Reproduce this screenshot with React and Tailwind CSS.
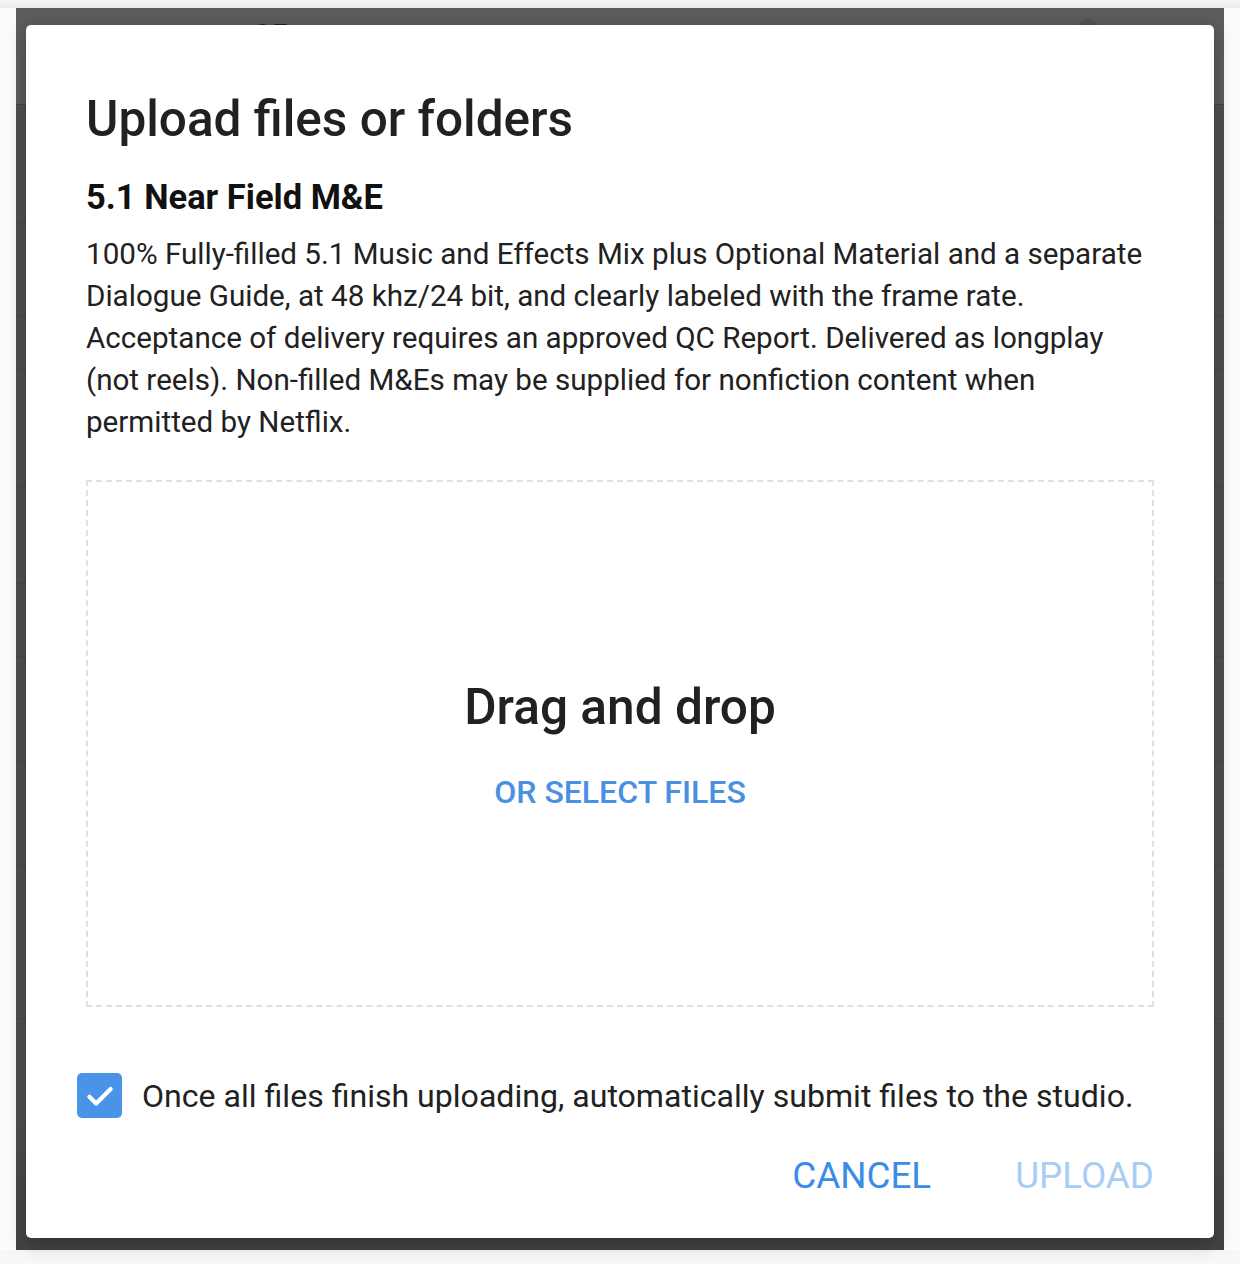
export default function App() {
  return (
    <div className="w-[1240px] h-[1264px] bg-[#fcfcfc] relative overflow-hidden" style={{ fontFamily: 'Roboto, "Noto Sans", sans-serif' }}>
      {/* top light strip */}
      <div className="h-[8px] bg-gradient-to-b from-[#f7f7f7] to-[#ececec]" />
      <div className="flex">
        <div className="w-[16px]" />
        {/* backdrop */}
        <div className="w-[1208px] h-[1242px] relative bg-[#505050]">
          <div className="flex flex-col h-full">
            <div className="h-[97px] bg-[#5d5d5d] border-b border-[#464646]" />
            <div className="h-[118px] border-b border-[#4a4a4a]" />
            <div className="h-[94px] border-b border-[#4a4a4a]" />
            <div className="h-[53px] border-b border-[#4a4a4a]" />
            <div className="h-[117px] border-b border-[#4a4a4a]" />
            <div className="h-[97px] border-b border-[#4a4a4a]" />
            <div className="h-[73px] border-b border-[#4a4a4a]" />
            <div className="h-[105px] border-b border-[#4a4a4a]" />
            <div className="h-[104px] border-b border-[#4a4a4a]" />
            <div className="h-[153px] border-b border-[#4a4a4a]" />
            <div className="h-[105px] border-b border-[#4a4a4a]" />
            <div className="flex-1 bg-gradient-to-b from-[#4f4f4f] to-[#434343]" />
          </div>
          <span className="absolute left-[238px] top-[12px] text-[30px] leading-[30px] font-bold text-[#1e1e1e]">95</span>
          <span className="absolute left-[1060px] top-[11px] w-[24px] h-[24px] rounded-full bg-[#565656]" />
          {/* dialog */}
          <div className="absolute left-[10px] top-[17px] w-[1188px] h-[1213px] bg-white rounded-[5px] shadow-[0_4px_20px_rgba(0,0,0,0.3)] flex flex-col px-[60px]">
            <h1 className="mt-[66px] text-[49.5px] leading-[56px] font-medium text-[#212121]">Upload files or folders</h1>
            <h2 className="mt-[30px] text-[34.5px] leading-[40px] font-bold text-[#111]">5.1 Near Field M&amp;E</h2>
            <p className="mt-[16px] text-[29.6px] leading-[42px] text-[#212121] whitespace-nowrap">
              100% Fully-filled 5.1 Music and Effects Mix plus Optional Material and a separate<br />
              Dialogue Guide, at 48 khz/24 bit, and clearly labeled with the frame rate.<br />
              Acceptance of delivery requires an approved QC Report. Delivered as longplay<br />
              (not reels). Non-filled M&amp;Es may be supplied for nonfiction content when<br />
              permitted by Netflix.
            </p>
            <div className="mt-[37px] h-[527px] border-2 border-dashed border-[#e0e0e0] flex flex-col items-center justify-center">
              <div className="text-[49.6px] leading-[56px] font-medium text-[#212121] mt-[3px]">Drag and drop</div>
              <button className="mt-[37px] text-[32px] leading-[40px] font-medium text-[#4a90e2]">OR SELECT FILES</button>
            </div>
            <label className="mt-[66px] flex items-center ml-[-9px]">
              <span className="w-[45px] h-[45px] shrink-0 rounded-[5px] bg-[#4a94e8] flex items-center justify-center">
                <svg width="34" height="34" viewBox="0 0 24 24" fill="none">
                  <path d="M4.5 12.5l4.8 4.8L19.5 7" stroke="white" strokeWidth="3" strokeLinecap="round" strokeLinejoin="round" />
                </svg>
              </span>
              <span className="ml-[20px] text-[32.1px] leading-[40px] text-[#212121] whitespace-nowrap">Once all files finish uploading, automatically submit files to the studio.</span>
            </label>
            <div className="mt-[38px] flex justify-end items-center gap-[84px]">
              <button className="text-[36.8px] leading-[40px] text-[#3c8ce7]">CANCEL</button>
              <button className="text-[36.8px] leading-[40px] text-[#a8cdf5]">UPLOAD</button>
            </div>
          </div>
        </div>
        <div className="w-[16px]" />
      </div>
      <div className="h-[14px] bg-[#f6f7f9]" />
    </div>
  );
}
